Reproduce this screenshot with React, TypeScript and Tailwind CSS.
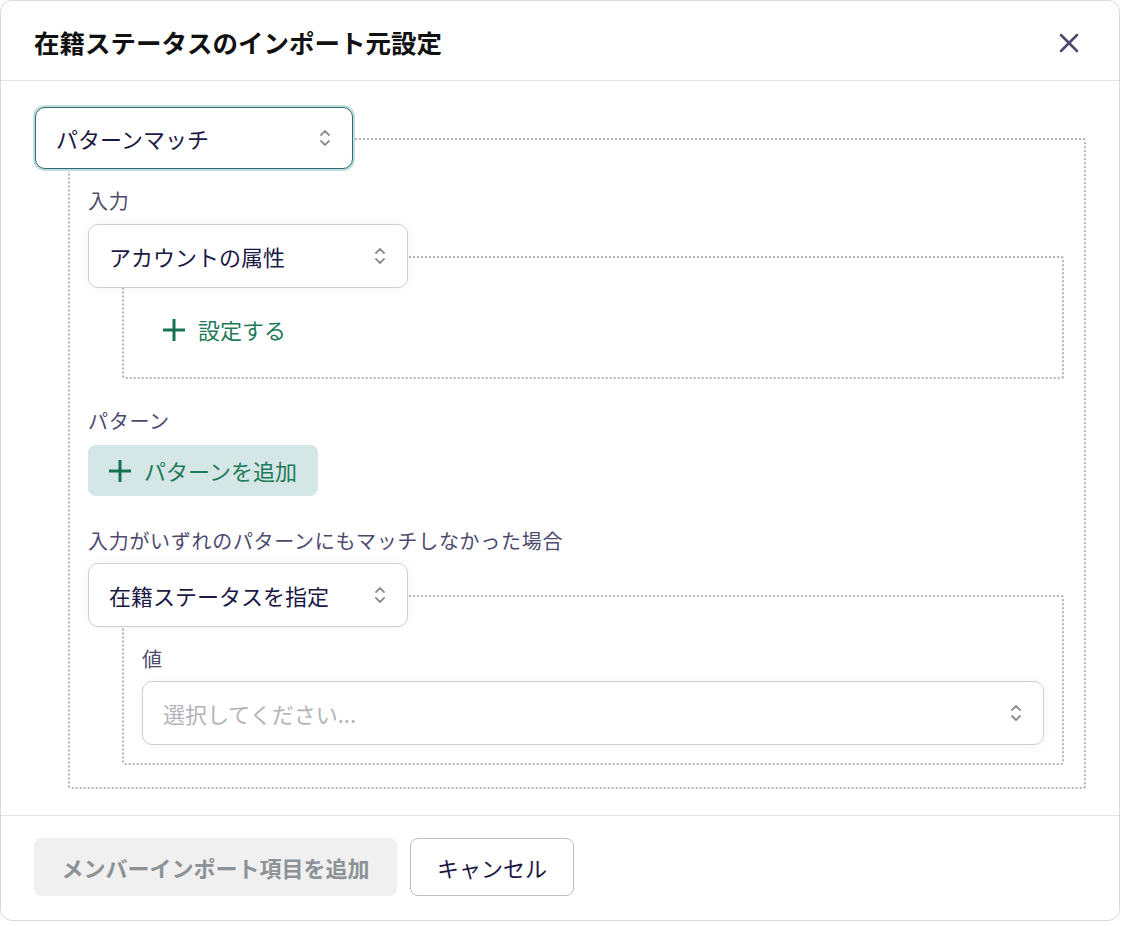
import type { ReactNode } from "react";

const Chevrons = () => (
  <svg width="12" height="20" viewBox="0 0 12 20" fill="none" stroke="#8d8d94" strokeWidth="1.8" strokeLinecap="round" strokeLinejoin="round">
    <path d="M2 7 L6 3 L10 7" />
    <path d="M2 13 L6 17 L10 13" />
  </svg>
);

const PlusIcon = () => (
  <svg width="22" height="22" viewBox="0 0 22 22" fill="none" stroke="#16734f" strokeWidth="3">
    <path d="M0 11 H22" />
    <path d="M11 0 V22" />
  </svg>
);

function Select({ value, placeholder, focused, className = "" }: { value?: string; placeholder?: string; focused?: boolean; className?: string }) {
  return (
    <div
      className={`relative z-10 flex items-center justify-between bg-white rounded-[10px] border pl-5 pr-[21px] text-[22px] ${
        focused
          ? "border-[#2f6d6d] ring-2 ring-[#c2dede]"
          : "border-[#cfcfd6] shadow-[0_0_12px_rgba(0,0,0,0.05)]"
      } ${className}`}
    >
      {value ? <span className="text-[#1a1845]">{value}</span> : <span className="text-[#b3b3b8]">{placeholder}</span>}
      <Chevrons />
    </div>
  );
}

function Label({ children, className = "" }: { children: ReactNode; className?: string }) {
  return <div className={`text-[20px] leading-[28px] tracking-[0.7px] text-[#4e4a6e] ${className}`}>{children}</div>;
}

function DottedBox({ children, className = "" }: { children: ReactNode; className?: string }) {
  return (
    <div className={`border-2 border-dotted border-[#b4b4b8] rounded-[3px] ${className}`}>
      {children}
    </div>
  );
}

export default function App() {
  return (
    <div className="min-h-screen bg-white font-['Noto_Sans_CJK_JP',sans-serif]">
      <div className="w-[1120px] flex flex-col bg-white border border-[#d9d9dc] rounded-xl">
        {/* header */}
        <div className="h-[79px] flex items-center justify-between pl-[33px] pr-[30px] pt-1">
          <h2 className="text-[25.5px] font-bold text-[#111]">在籍ステータスのインポート元設定</h2>
          <button className="w-10 h-10 flex items-center justify-center">
            <svg width="20" height="20" viewBox="0 0 20 20" fill="none" stroke="#4b4869" strokeWidth="2.5" strokeLinecap="round">
              <path d="M2 2 L18 18" />
              <path d="M18 2 L2 18" />
            </svg>
          </button>
        </div>

        {/* body */}
        <div className="border-t border-[#e3e3e6] pt-[26px] pb-[26px] pl-[34px] pr-[33px] flex flex-col">
          <Select value="パターンマッチ" focused className="w-[318px] h-[62px]" />
          <DottedBox className="-mt-[31px] ml-[33px] pt-[47px] pl-[18px] pr-[20px] pb-[22px] flex flex-col">
            <Label>入力</Label>
            <Select value="アカウントの属性" className="mt-[9px] w-[320px] h-[64px]" />
            <DottedBox className="-mt-[32px] ml-[34px] pt-[46px] pl-[18px] pb-[22px]">
              <button className="h-[51px] px-[21px] flex items-center gap-[13px] text-[22px] text-[#1f7a5a]">
                <PlusIcon />
                設定する
              </button>
            </DottedBox>

            <Label className="mt-[28px]">パターン</Label>
            <button className="mt-[10px] w-[230px] h-[51px] px-[21px] flex items-center gap-[13px] rounded-lg bg-[#d4e6e6] text-[22px] text-[#1f7a5a]">
              <PlusIcon />
              パターンを追加
            </button>

            <Label className="mt-[31px]">入力がいずれのパターンにもマッチしなかった場合</Label>
            <Select value="在籍ステータスを指定" className="mt-[8px] w-[320px] h-[64px]" />
            <DottedBox className="-mt-[32px] ml-[34px] pt-[48px] px-[18px] pb-[18px] flex flex-col">
              <Label className="text-[#3f3a68]">値</Label>
              <Select placeholder="選択してください..." className="mt-[8px] h-[64px]" />
            </DottedBox>
          </DottedBox>
        </div>

        {/* footer */}
        <div className="border-t border-[#e3e3e6] pt-[22px] pb-[24px] pl-[33px] flex items-center gap-[13px]">
          <button className="h-[58px] w-[363px] rounded-lg bg-[#f0f0f0] text-[22px] font-bold text-[#8d9296]">
            メンバーインポート項目を追加
          </button>
          <button className="h-[58px] w-[164px] rounded-lg border border-[#bcbcc4] bg-white text-[22px] text-[#1a1845]">
            キャンセル
          </button>
        </div>
      </div>
    </div>
  );
}
